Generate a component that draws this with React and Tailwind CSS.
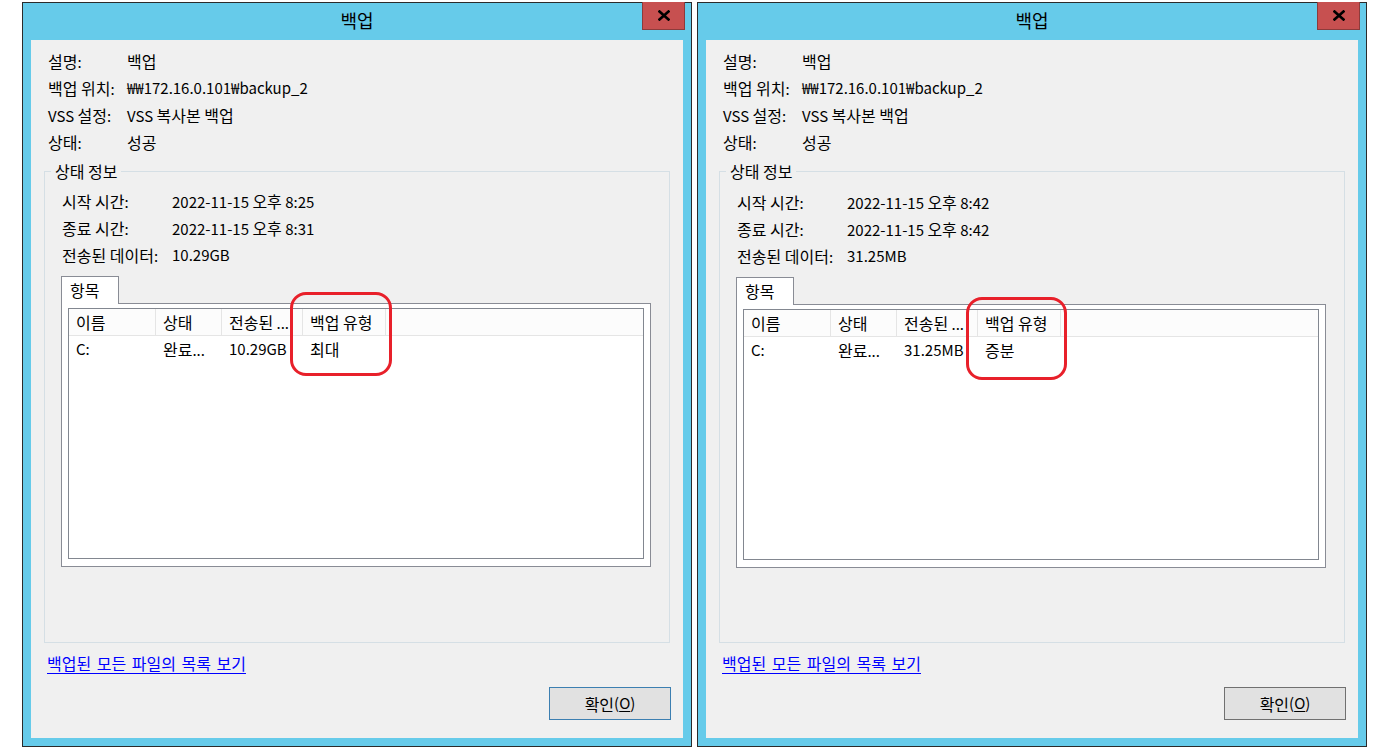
import React from 'react';

// Hangul runs are set a touch larger than Latin, like Malgun Gothic next to its Segoe-like Latin
const T = ({ children }) => {
  const parts = String(children).split(/([가-힣]+(?: [가-힣]+)*)/);
  return (
    <span className="whitespace-pre">
      {parts.map((p, i) =>
        /[가-힣]/.test(p) ? (
          <span key={i} className="text-[16px]">
            {p}
          </span>
        ) : (
          p
        )
      )}
    </span>
  );
};

const Field = ({ label, value, w }) => (
  <div className="flex h-[27px] items-center">
    <span className={`${w} shrink-0 whitespace-nowrap`}><T>{label}</T></span>
    <span className="whitespace-nowrap"><T>{value}</T></span>
  </div>
);

const CloseGlyph = () => (
  <svg width="12" height="11" viewBox="0 0 12 11">
    <path d="M1.5 1.5 L10.5 9.5 M10.5 1.5 L1.5 9.5" stroke="#000" strokeWidth="2.6" strokeLinecap="square" />
  </svg>
);

const Dialog = ({ data, focused, mark }) => {
  const cols = [
    { name: '이름', w: 'w-[87px]', v: 'C:' },
    { name: '상태', w: 'w-[66px]', v: '완료...' },
    { name: '전송된 ...', w: 'w-[81px]', v: data.size },
    { name: '백업 유형', w: 'w-[83px]', v: data.type },
  ];

  return (
    <div className="relative flex h-[745px] w-[670px] shrink-0 flex-col border border-[#2b2b2b] bg-[#66cbea]">
      {/* title bar */}
      <div className="flex h-[37px] items-center justify-center pb-[2px] text-[18px] text-black">백업</div>
      <div className="absolute -top-px right-[6px] flex h-[28px] w-[43px] items-center justify-center border border-t-0 border-[#8c3b3b] bg-[#c75050]">
        <CloseGlyph />
      </div>

      {/* client area */}
      <div className="mx-[8px] flex h-[698px] flex-col bg-[#f0f0f0] text-[15px] text-black">
        <div className="pl-[17px] pt-[8px]">
          <Field label="설명:" value="백업" w="w-[79px]" />
          <Field label="백업 위치:" value="₩₩172.16.0.101₩backup_2" w="w-[79px]" />
          <Field label="VSS 설정:" value="VSS 복사본 백업" w="w-[79px]" />
          <Field label="상태:" value="성공" w="w-[79px]" />
        </div>

        <fieldset className="mx-[13px] mt-[5px] h-[482px] border border-[#d5dfe5]">
          <legend className="ml-[6px] px-[4px] leading-[20px]"><T>상태 정보</T></legend>
          <div className={data.shift ? 'pl-[17px] pt-[7px]' : 'pl-[17px] pt-[6px]'}>
            <Field label="시작 시간:" value={data.start} w="w-[110px]" />
            <Field label="종료 시간:" value={data.end} w="w-[110px]" />
            <Field label="전송된 데이터:" value={data.size} w="w-[110px]" />
          </div>

          <div className="ml-[16px] mt-[7px] w-[590px]">
            <div className="relative z-10 -mb-px flex h-[28px] w-[58px] items-center border border-b-0 border-[#898c95] bg-white pl-[8px]">
              <T>항목</T>
            </div>
            <div className="h-[264px] border border-[#898c95] bg-white px-[6px] pb-[7px] pt-[4px]">
              <div className="h-[251px] border border-[#828790] bg-white">
                <div className="flex h-[27px] border-b border-[#e5e5e5] bg-[#fcfcfc]">
                  {cols.map((c) => (
                    <div key={c.name} className={`${c.w} flex items-center overflow-hidden border-r border-[#e5e5e5] pl-[7px]`}>
                      <T>{c.name}</T>
                    </div>
                  ))}
                </div>
                <div className="flex h-[26px]">
                  {cols.map((c) => (
                    <div key={c.name} className={`${c.w} flex items-center pl-[7px]`}>
                      <T>{c.v}</T>
                    </div>
                  ))}
                </div>
              </div>
            </div>
          </div>
        </fieldset>

        <div className="ml-[16px] mt-[10px] flex h-[20px] items-center">
          <a className="text-[#0000ff] underline underline-offset-[3px] [word-spacing:2px]" href="#">
            <T>백업된 모든 파일의 목록 보기</T>
          </a>
        </div>

        <div className="mr-[12px] mt-[14px] flex justify-end">
          <button
            className={`flex h-[33px] w-[122px] items-center justify-center border bg-[#e1e1e1] ${
              focused ? 'border-[#3c7fb1]' : 'border-[#707070]'
            }`}
          >
            <span className="text-[16px]">확인</span>(<span className="underline underline-offset-[2px]">O</span>)
          </button>
        </div>
      </div>

      {/* hand-drawn highlight around the backup type column */}
      <div className={`pointer-events-none absolute rounded-[16px] border-[3px] border-[#e8202a] ${mark}`} />
    </div>
  );
};

export default function App() {
  return (
    <div className="flex h-[753px] w-[1390px] gap-[5px] bg-white pl-[22px] pt-[2px] font-['Noto_Sans_CJK_KR',sans-serif]">
      <Dialog
        focused
        mark="left-[267px] top-[289px] h-[84px] w-[102px]"
        data={{ start: '2022-11-15 오후 8:25', end: '2022-11-15 오후 8:31', size: '10.29GB', type: '최대' }}
      />
      <Dialog
        mark="left-[268px] top-[294px] h-[83px] w-[101px]"
        data={{ start: '2022-11-15 오후 8:42', end: '2022-11-15 오후 8:42', size: '31.25MB', type: '증분', shift: true }}
      />
    </div>
  );
}
